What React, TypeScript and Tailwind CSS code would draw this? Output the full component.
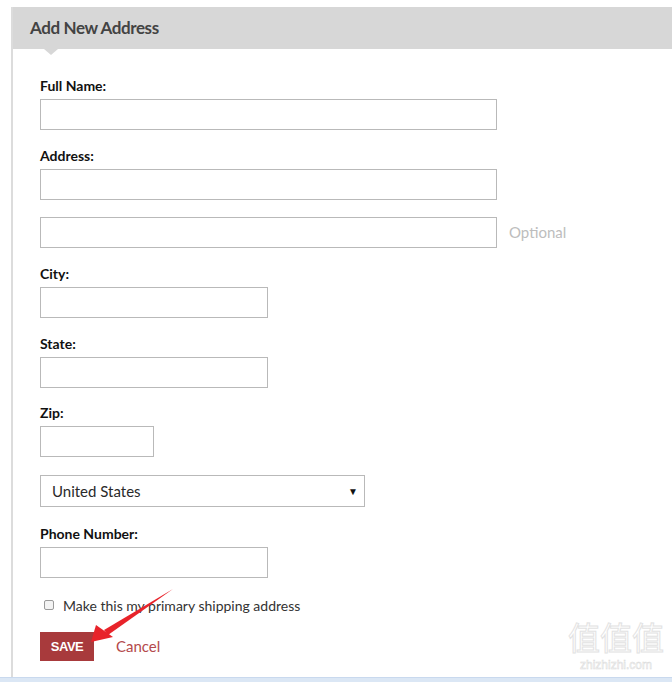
import React from "react";

const labelCls = "block h-[18px] text-[14px] leading-[18px] font-bold text-[#111]";
const inputCls = "block h-[31px] border border-[#b9b9b9] bg-white outline-none px-2 text-[14px]";

const Field = ({ label, width, mt }: { label: string; width: string; mt: string }) => (
    <div className={mt}>
        <label className={labelCls}>{label}</label>
        <input type="text" className={`${inputCls} ${width} mt-[4px]`} />
    </div>
);

export default function App() {
    return (
        <div className="relative w-[672px] h-[682px] bg-white overflow-hidden flex flex-col" style={{ fontFamily: "Lato, 'Open Sans', sans-serif" }}>
            <div className="h-[7px]" />
            <section className="ml-[11px] flex-1 border-l-2 border-[#dcdcdc] flex flex-col">
                <div className="relative h-[42px] bg-[#d7d7d7] flex items-center pl-[17px]">
                    <h1 className="text-[17px] font-bold text-[#434343] tracking-[-0.4px]">Add New Address</h1>
                    <span className="absolute left-[31px] top-[42px] w-0 h-0 border-l-[7px] border-r-[7px] border-t-[6px] border-l-transparent border-r-transparent border-t-[#d7d7d7]" />
                </div>

                <form className="pl-[27px] pt-[28px]" onSubmit={(e) => e.preventDefault()}>
                    <Field label="Full Name:" width="w-[457px]" mt="" />
                    <Field label="Address:" width="w-[457px]" mt="mt-[17px]" />
                    <div className="mt-[17px] flex items-center gap-[12px]">
                        <input type="text" className={`${inputCls} w-[457px]`} />
                        <span className="text-[15px] text-[#bdbdbd]">Optional</span>
                    </div>
                    <Field label="City:" width="w-[228px]" mt="mt-[17px]" />
                    <Field label="State:" width="w-[228px]" mt="mt-[17px]" />
                    <Field label="Zip:" width="w-[114px]" mt="mt-[16px]" />

                    <div className="mt-[18px] w-[325px] h-[32px] border border-[#b9b9b9] flex items-center justify-between pl-[11px] pr-[6px]">
                        <span className="text-[15px] text-[#2a2a2a]">United States</span>
                        <span className="text-[10px] text-[#111]">▼</span>
                    </div>

                    <Field label="Phone Number:" width="w-[228px]" mt="mt-[18px]" />

                    <div className="mt-[18px] h-[18px] flex items-center pl-[4px] gap-[9px]">
                        <span className="w-[10px] h-[10px] rounded-[2px] border border-[#9a9a9a] bg-[#f3f3f3]" />
                        <span className="text-[14px] text-[#333]">Make this my primary shipping address</span>
                    </div>

                    <div className="mt-[18px] flex items-center gap-[22px]">
                        <button className="w-[54px] h-[29px] bg-[#a83a3c] text-white text-[13px] font-bold tracking-[-0.5px]" style={{ fontFamily: "'Liberation Sans', sans-serif" }}>
                            SAVE
                        </button>
                        <a href="#" className="text-[15px] text-[#b44a4c]">Cancel</a>
                    </div>
                </form>
            </section>
            <div className="h-[5px] bg-[#dbe7f5] border-t border-[#c9d9ee]" />

            <svg className="absolute left-0 top-0 pointer-events-none" width="672" height="682">
                <path d="M173 589 L104 630 L108 635 Z" fill="#e8232a" />
                <path d="M91 642 L96 625 L113 637 Z" fill="#e8232a" />
            </svg>

            <div className="absolute right-[8px] bottom-[10px] flex flex-col items-center gap-[2px] pointer-events-none">
                <span className="text-[32px] leading-[40px] text-white [-webkit-text-stroke:1px_#e2e2e2]" style={{ fontFamily: "'Noto Sans CJK SC', sans-serif" }}>值值值</span>
                <span className="text-[12px] leading-[14px] text-white [-webkit-text-stroke:0.5px_#d8d8d8]" style={{ fontFamily: "'Liberation Sans', sans-serif" }}>zhizhizhi.com</span>
            </div>
        </div>
    );
}
